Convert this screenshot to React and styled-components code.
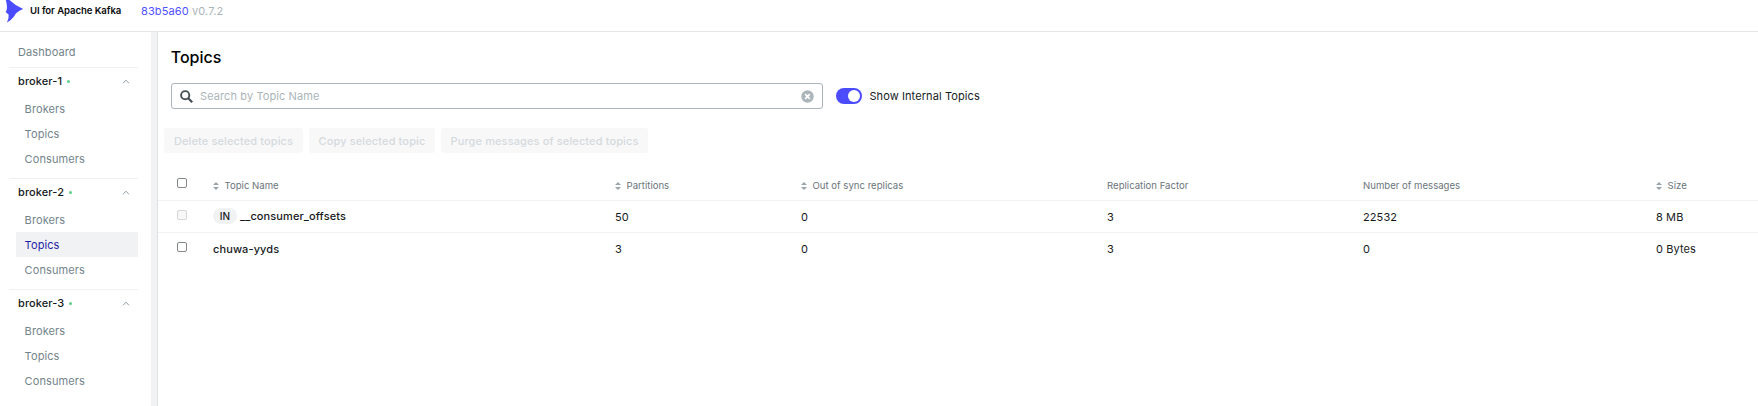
import React from "react";
import styled, { createGlobalStyle, css } from "styled-components";

const GlobalStyle = createGlobalStyle`
  * { box-sizing: border-box; }
  body { margin: 0; background: #fff; overflow: hidden; font-family: Inter, "Liberation Sans", sans-serif; font-size: 11px; letter-spacing: 0.1px; color: #171a1c; }
`;

const Page = styled.div`
  height: 406px;
  display: flex;
  flex-direction: column;
`;
const NavBar = styled.header`
  height: 32px;
  flex: none;
  display: flex;
  align-items: flex-start;
  border-bottom: 1px solid #e3e6e8;
`;
const LogoIcon = styled.svg`
  width: 20px;
  height: 24px;
  margin-left: 4px;
  flex: none;
`;
const Brand = styled.span`
  width: 92px;
  margin-left: 6px;
  font-size: 9.6px;
  letter-spacing: -0.08px;
  font-weight: 600;
  line-height: 21px;
  white-space: nowrap;
  color: #0b0d0e;
`;
const Version = styled.span`
  margin-left: 19px;
  line-height: 22px;
  font-size: 11px;
  letter-spacing: 0.12px;
  color: #abb5ba;
`;
const Commit = styled.a`
  color: #4f4fff;
`;
const Body = styled.div`
  flex: 1;
  display: flex;
  min-height: 0;
`;
const Sidebar = styled.nav`
  width: 151px;
  flex: none;
  padding: 6px 13px 0 9px;
`;
const Gutter = styled.div`
  width: 7px;
  flex: none;
  background: #f1f2f3;
  border-right: 1px solid #dfe2e4;
`;
const itemText = css`
  font-size: 11px;
  color: #73848c;
`;
const DashboardLink = styled.div`
  ${itemText}
  height: 29px;
  padding: 1px 0 0 9px;
  line-height: 27px;
`;
const Cluster = styled.section`
  height: 111px;
  border-top: 1px solid #eef0f1;
`;
const ClusterHead = styled.div`
  height: 28px;
  display: flex;
  align-items: center;
  padding: 0 8px 2px 9px;
  font-size: 11px;
  font-weight: 500;
`;
const Dot = styled.i`
  width: 3px;
  height: 3px;
  margin-left: 5px;
  border-radius: 50%;
  background: #5ccf8a;
`;
const Chevron = styled.svg`
  width: 8px;
  height: 5px;
  margin-left: auto;
`;
const MenuItem = styled.div`
  ${itemText}
  height: 25px;
  line-height: 26px;
  margin-left: 7px;
  padding-left: 8.6px;
  ${(p) => p.$active && css`background: #f1f2f3; color: #1f1fa8;`}
  &:last-child { line-height: 27px; }
`;
const Main = styled.main`
  flex: 1;
  min-width: 0;
`;
const Title = styled.h1`
  margin: 0;
  padding: 13px 0 0 12.7px;
  font-size: 16px;
  letter-spacing: 0;
  line-height: 25px;
  height: 51px;
  font-weight: 500;
  color: #000;
`;
const Controls = styled.div`
  display: flex;
  align-items: center;
  padding-left: 13px;
`;
const SearchBox = styled.div`
  width: 652px;
  height: 26px;
  border: 1px solid #abb5ba;
  border-radius: 3px;
  display: flex;
  align-items: center;
  padding: 0 8px;
  font-size: 11px;
  color: #abb5ba;
`;
const SearchIcon = styled.svg`
  width: 13px;
  height: 13px;
  margin-right: 7px;
`;
const ClearIcon = styled.svg`
  width: 13px;
  height: 13px;
  margin-left: auto;
`;
const Switch = styled.span`
  width: 26px;
  height: 16px;
  margin: 0 7px 0 13.4px;
  padding: 2px;
  border-radius: 8px;
  background: #4c4cff;
  display: flex;
  justify-content: flex-end;
`;
const Knob = styled.i`
  width: 12px;
  height: 12px;
  border-radius: 50%;
  background: #fff;
`;
const SwitchLabel = styled.span`
  font-size: 11px;
`;
const Actions = styled.div`
  display: flex;
  gap: 6px;
  padding: 19px 0 0 6px;
`;
const ActionButton = styled.button`
  width: ${(p) => p.$width}px;
  height: 25px;
  padding: 0;
  border: 0;
  border-radius: 3px;
  background: #f8f8f9;
  color: #d5dadd;
  font: 500 11px Inter, sans-serif;
  letter-spacing: 0.12px;
`;
const Table = styled.div`
  margin-top: 16px;
`;
const Row = styled.div`
  display: grid;
  grid-template-columns: 55px 402px 186px 306px 256px 293px 1fr;
  height: ${(p) => p.$height}px;
  align-items: center;
  border-bottom: 1px solid ${(p) => (p.$last ? "transparent" : "#f1f2f3")};
`;
const HeadCell = styled.div`
  display: flex;
  align-items: center;
  padding-top: 2px;
  font-size: 9.6px;
  letter-spacing: 0;
  color: #6b757b;
`;
const SortIcon = styled.svg`
  width: 6px;
  height: 8px;
  margin-right: 5.5px;
`;
const Cell = styled.div`
  display: flex;
  align-items: center;
  padding-top: ${(p) => (p.$raised ? 0 : 1)}px;
  margin-top: ${(p) => (p.$raised ? -1 : 0)}px;
  font-size: 11px;
  font-weight: ${(p) => (p.$strong ? 500 : 400)};
`;
const Check = styled.span`
  width: 10px;
  height: 10px;
  margin: 0 0 3px 19px;
  border-radius: 2px;
  border: 1px solid ${(p) => (p.$disabled ? "#d4d6d8" : "#85898c")};
  background: ${(p) => (p.$disabled ? "#f8f8f8" : "#fff")};
`;
const Tag = styled.span`
  width: 24px;
  height: 16px;
  margin-right: 3px;
  border-radius: 8px;
  background: #f1f2f3;
  font-size: 10px;
  line-height: 16px;
  text-align: center;
`;

const clusters = [
  { name: "broker-1" },
  { name: "broker-2", active: "Topics" },
  { name: "broker-3" },
];
const columns = [
  ["Topic Name", true],
  ["Partitions", true],
  ["Out of sync replicas", true],
  ["Replication Factor", false],
  ["Number of messages", false],
  ["Size", true],
];
const topics = [
  { name: "__consumer_offsets", internal: true, values: ["50", "0", "3", "22532", "8 MB"] },
  { name: "chuwa-yyds", values: ["3", "0", "3", "0", "0 Bytes"] },
];

export default function App() {
  return (
    <Page>
      <GlobalStyle />
      <NavBar>
        <LogoIcon viewBox="0 0 20 24">
          <path d="M1.8 0H5.5Q11 5.5 19.2 9 12 11.5 10 16.5 7.5 20 3 22.5 5.2 18 4.6 14.5L1.6 12Q3.2 9.5 3 7 2.8 3 1.8 0Z" fill="#4c4cff" />
        </LogoIcon>
        <Brand>UI for Apache Kafka</Brand>
        <Version><Commit>83b5a60</Commit> v0.7.2</Version>
      </NavBar>
      <Body>
        <Sidebar>
          <DashboardLink>Dashboard</DashboardLink>
          {clusters.map((c) => (
            <Cluster key={c.name}>
              <ClusterHead>
                {c.name}
                <Dot />
                <Chevron viewBox="0 0 8 5">
                  <path d="M1 4.3 4 1.2 7 4.3" fill="none" stroke="#85939a" strokeWidth=".9" />
                </Chevron>
              </ClusterHead>
              {["Brokers", "Topics", "Consumers"].map((m) => (
                <MenuItem key={m} $active={c.active === m}>{m}</MenuItem>
              ))}
            </Cluster>
          ))}
        </Sidebar>
        <Gutter />
        <Main>
          <Title>Topics</Title>
          <Controls>
            <SearchBox>
              <SearchIcon viewBox="0 0 13 13">
                <circle cx="5.2" cy="5.2" r="4.1" fill="none" stroke="#454f54" strokeWidth="1.9" />
                <path d="M8.2 8.2 12.2 12.2" stroke="#454f54" strokeWidth="2.2" />
              </SearchIcon>
              Search by Topic Name
              <ClearIcon viewBox="0 0 13 13">
                <circle cx="6.5" cy="6.5" r="6.2" fill="#abb5ba" />
                <path d="M4.2 4.2 8.8 8.8M8.8 4.2 4.2 8.8" stroke="#fff" strokeWidth="1.7" />
              </ClearIcon>
            </SearchBox>
            <Switch><Knob /></Switch>
            <SwitchLabel>Show Internal Topics</SwitchLabel>
          </Controls>
          <Actions>
            <ActionButton $width={139}>Delete selected topics</ActionButton>
            <ActionButton $width={126}>Copy selected topic</ActionButton>
            <ActionButton $width={207}>Purge messages of selected topics</ActionButton>
          </Actions>
          <Table>
            <Row $height={32}>
              <Check />
              {columns.map(([label, sortable]) => (
                <HeadCell key={label}>
                  {sortable && (
                    <SortIcon viewBox="0 0 6 8">
                      <path d="M0 3 3 0 6 3ZM0 5 3 8 6 5Z" fill="#9aa5ab" />
                    </SortIcon>
                  )}
                  {label}
                </HeadCell>
              ))}
            </Row>
            {topics.map((t, i) => (
              <Row key={t.name} $height={32} $last={i === topics.length - 1}>
                <Check $disabled={t.internal} />
                <Cell $strong $raised={t.internal}>
                  {t.internal && <Tag>IN</Tag>}
                  {t.name}
                </Cell>
                {t.values.map((v, j) => <Cell key={j}>{v}</Cell>)}
              </Row>
            ))}
          </Table>
        </Main>
      </Body>
    </Page>
  );
}
